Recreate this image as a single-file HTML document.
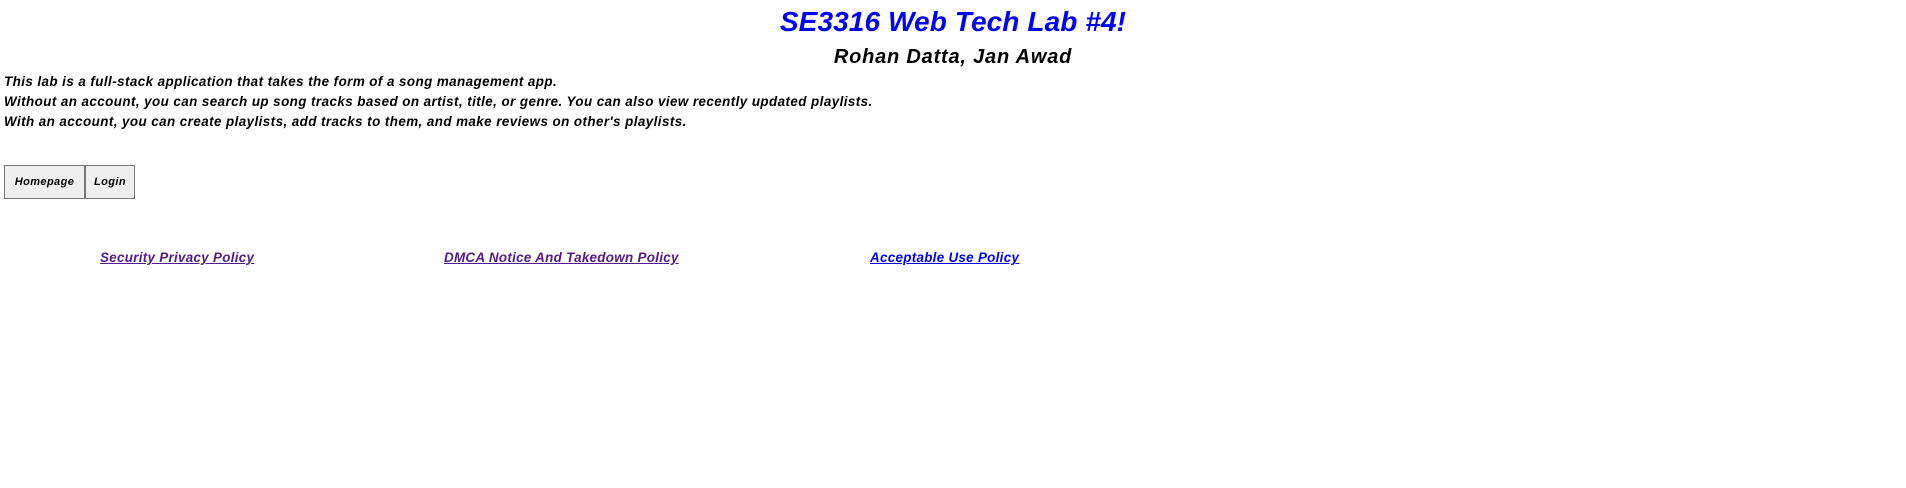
<!DOCTYPE html>
<html><head><meta charset="utf-8"><style>
body{margin:0;width:1906px;height:488px;background:#fff;font-family:"Liberation Sans",sans-serif;font-style:italic;font-weight:bold;position:relative;overflow:hidden}
.a{position:absolute;white-space:nowrap}
h1{position:absolute;margin:0;left:0;width:1906px;text-align:center;top:4px;font-size:28px;color:#0000ff;font-weight:bold;line-height:36px;letter-spacing:0.1px}
h2{position:absolute;margin:0;left:0;width:1906px;text-align:center;top:44px;font-size:20px;color:#000;font-weight:bold;line-height:26px;letter-spacing:0.8px}
.p{left:4px;font-size:13.4px;line-height:20px;top:72px;letter-spacing:0.43px}
.btn{position:absolute;top:165px;height:32px;border:1px solid #767676;background:#efefef;font-size:11px;line-height:32px;text-align:center;box-sizing:content-box;letter-spacing:0.4px}
.l{top:250px;font-size:13.4px;text-decoration:underline;letter-spacing:0.3px}
</style></head><body>
<h1>SE3316 Web Tech Lab #4!</h1>
<h2>Rohan Datta, Jan Awad</h2>
<div class="a p">This lab is a full-stack application that takes the form of a song management app.<br>Without an account, you can search up song tracks based on artist, title, or genre. You can also view recently updated playlists.<br>With an account, you can create playlists, add tracks to them, and make reviews on other's playlists.</div>
<div class="btn" style="left:4px;width:79px">Homepage</div>
<div class="btn" style="left:85px;width:48px">Login</div>
<div class="a l" style="left:100px;color:#551a8b">Security Privacy Policy</div>
<div class="a l" style="left:444px;color:#551a8b">DMCA Notice And Takedown Policy</div>
<div class="a l" style="left:870px;color:#0000ee">Acceptable Use Policy</div>
</body></html>
